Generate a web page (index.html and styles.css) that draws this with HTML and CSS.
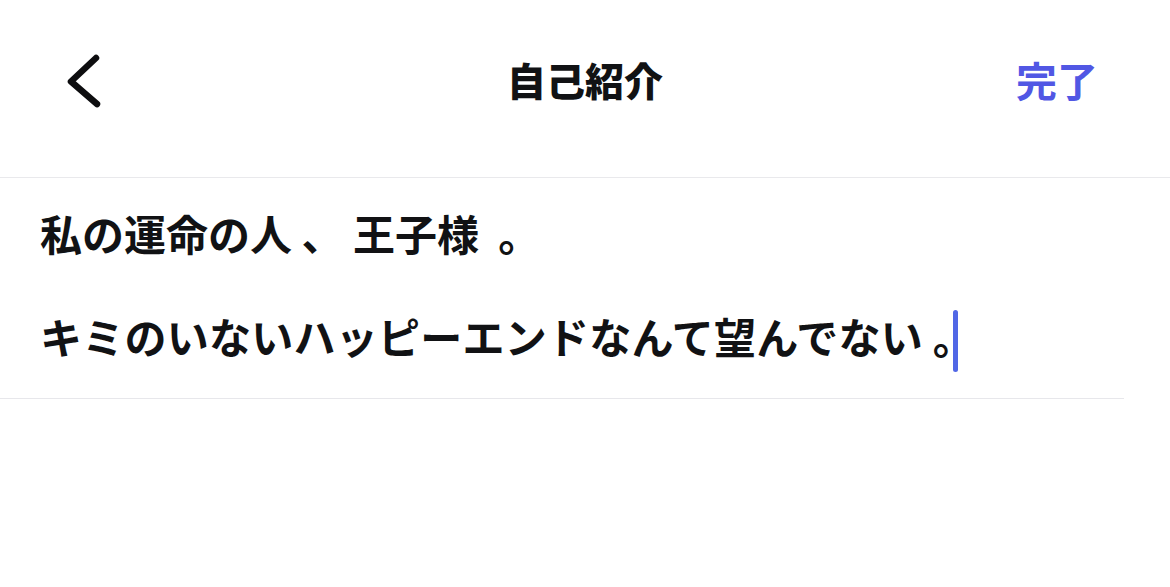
FILE: index.html
```html
<!DOCTYPE html>
<html lang="ja">
<head>
<meta charset="utf-8">
<title>自己紹介</title>
<link rel="stylesheet" href="styles.css">
</head>
<body>
<div class="screen">
  <header class="nav">
    <div class="nav-left">
      <svg class="back" width="44" height="60" viewBox="0 0 44 60" aria-label="戻る">
        <path d="M36 6 L11 29.5 L37 52" fill="none" stroke="#0d0d0f" stroke-width="6.5" stroke-linecap="round" stroke-linejoin="round"/>
      </svg>
    </div>
    <h1 class="nav-title">自己紹介</h1>
    <div class="nav-right"><span class="done">完了</span></div>
  </header>
  <section class="editor">
    <p class="line">私の運命の人 、 王子様  。</p>
    <p class="line blank">&nbsp;</p>
    <p class="line">キミのいないハッピーエンドなんて望んでない 。<span class="caret"></span></p>
  </section>
</div>
</body>
</html>
```
FILE: styles.css
```css
* { box-sizing: border-box; }
html, body { margin: 0; padding: 0; background: #ffffff; }
body {
  font-family: "Noto Sans CJK JP", "Noto Sans", sans-serif;
  color: #111214;
}
.screen { width: 1170px; height: 587px; overflow: hidden; }
.nav {
  height: 178px;
  padding-bottom: 20px;
  border-bottom: 1px solid #e9e9ec;
  display: grid;
  grid-template-columns: 1fr auto 1fr;
  align-items: center;
}
.nav-left { justify-self: start; padding-left: 60px; margin-top: 6px; display: flex; }
.back { display: block; }
.nav-title {
  margin: 0;
  font-size: 39px;
  font-weight: 900;
  line-height: 50px;
  color: #111214;
}
.nav-right { justify-self: end; padding-right: 72px; }
.done {
  font-size: 41px;
  font-weight: 700;
  line-height: 50px;
  color: #5157e4;
}
.editor {
  width: 1124px;
  padding: 29px 0 36px 40px;
  border-bottom: 1px solid #e7e7eb;
}
.line {
  margin: 0;
  font-size: 42px;
  font-weight: 700;
  line-height: 51.5px;
  white-space: pre;
}
.line:last-child { letter-spacing: 0.25px; }
.caret {
  position: relative;
  display: inline-block;
  width: 0;
  height: 1em;
  vertical-align: baseline;
}
.caret::after {
  content: "";
  position: absolute;
  left: -22px;
  bottom: -18px;
  width: 5px;
  height: 62px;
  border-radius: 3px;
  background: #5167e6;
}
```
